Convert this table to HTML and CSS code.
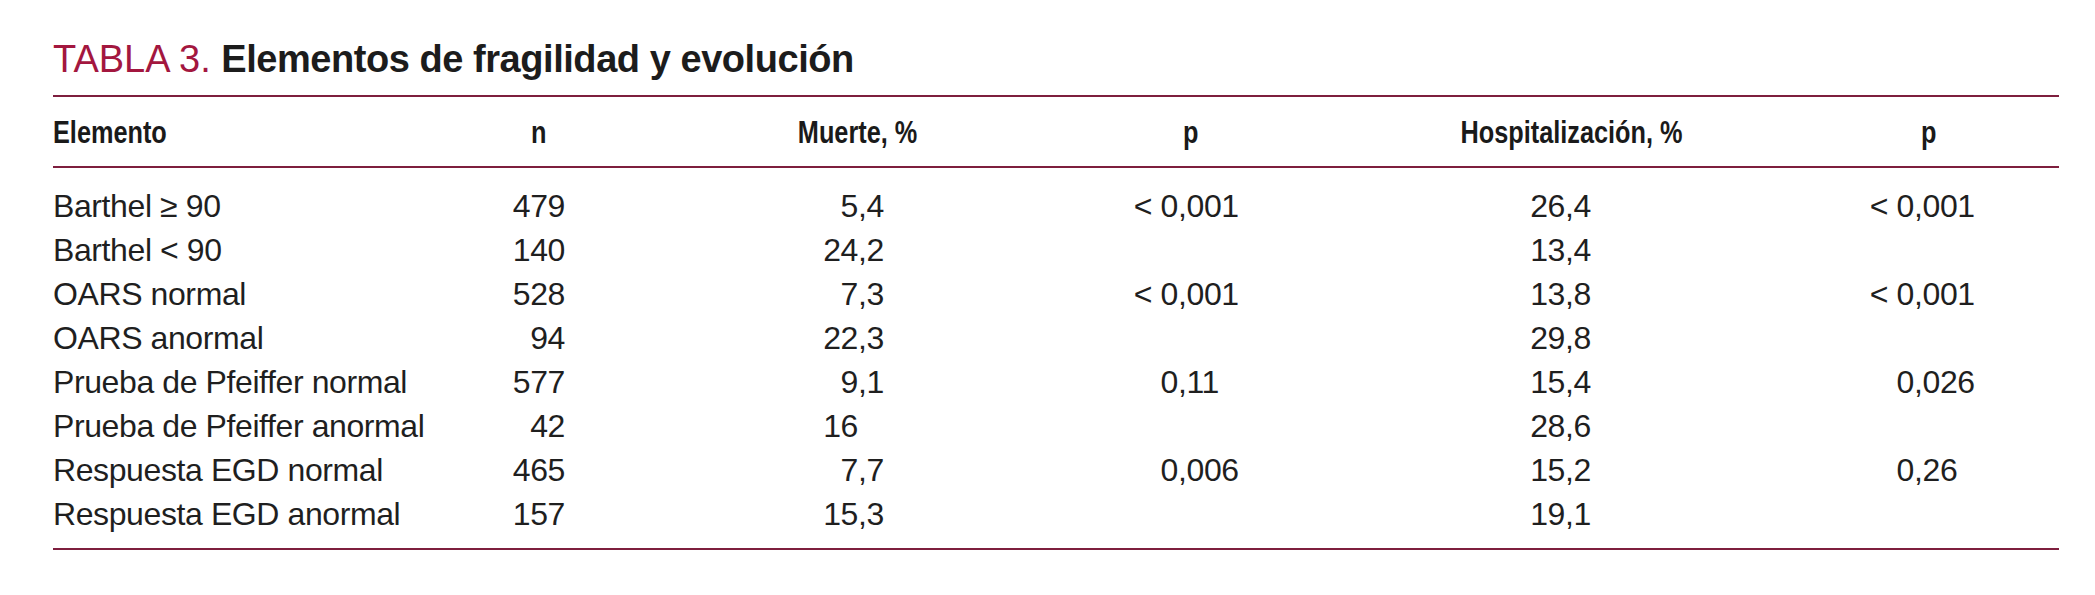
FILE: index.html
```html
<!DOCTYPE html>
<html lang="es">
<head>
<meta charset="utf-8">
<title>Tabla 3</title>
<link rel="stylesheet" href="styles.css">
</head>
<body>
<div class="page">
  <h1 class="title"><span class="label">TABLA 3.</span> <span class="name">Elementos de fragilidad y evolución</span></h1>
  <table class="data">
    <colgroup>
      <col class="c-el"><col class="c-n"><col class="c-m"><col class="c-p1"><col class="c-h"><col class="c-p2">
    </colgroup>
    <thead>
      <tr>
        <th class="left"><span class="hd">Elemento</span></th>
        <th><span class="hd">n</span></th>
        <th><span class="hd">Muerte, %</span></th>
        <th><span class="hd">p</span></th>
        <th><span class="hd">Hospitalización, %</span></th>
        <th><span class="hd">p</span></th>
      </tr>
    </thead>
    <tbody>
      <tr><td>Barthel ≥ 90</td><td><span class="i">479</span></td><td><span class="i">5</span><span class="f">,4</span></td><td><span class="i">&lt; 0</span><span class="f">,001</span></td><td><span class="i">26</span><span class="f">,4</span></td><td><span class="i">&lt; 0</span><span class="f">,001</span></td></tr>
      <tr><td>Barthel &lt; 90</td><td><span class="i">140</span></td><td><span class="i">24</span><span class="f">,2</span></td><td></td><td><span class="i">13</span><span class="f">,4</span></td><td></td></tr>
      <tr><td>OARS normal</td><td><span class="i">528</span></td><td><span class="i">7</span><span class="f">,3</span></td><td><span class="i">&lt; 0</span><span class="f">,001</span></td><td><span class="i">13</span><span class="f">,8</span></td><td><span class="i">&lt; 0</span><span class="f">,001</span></td></tr>
      <tr><td>OARS anormal</td><td><span class="i">94</span></td><td><span class="i">22</span><span class="f">,3</span></td><td></td><td><span class="i">29</span><span class="f">,8</span></td><td></td></tr>
      <tr><td>Prueba de Pfeiffer normal</td><td><span class="i">577</span></td><td><span class="i">9</span><span class="f">,1</span></td><td><span class="i">0</span><span class="f">,11</span></td><td><span class="i">15</span><span class="f">,4</span></td><td><span class="i">0</span><span class="f">,026</span></td></tr>
      <tr><td>Prueba de Pfeiffer anormal</td><td><span class="i">42</span></td><td><span class="i">16</span></td><td></td><td><span class="i">28</span><span class="f">,6</span></td><td></td></tr>
      <tr><td>Respuesta EGD normal</td><td><span class="i">465</span></td><td><span class="i">7</span><span class="f">,7</span></td><td><span class="i">0</span><span class="f">,006</span></td><td><span class="i">15</span><span class="f">,2</span></td><td><span class="i">0</span><span class="f">,26</span></td></tr>
      <tr><td>Respuesta EGD anormal</td><td><span class="i">157</span></td><td><span class="i">15</span><span class="f">,3</span></td><td></td><td><span class="i">19</span><span class="f">,1</span></td><td></td></tr>
    </tbody>
  </table>
</div>
</body>
</html>
```

FILE: styles.css
```css
html, body {
  margin: 0;
  padding: 0;
  background: #ffffff;
}

.page {
  padding: 37px 0 0 53px;
  font-family: "Liberation Sans", Arial, sans-serif;
  color: #1f1f1f;
}

.title {
  margin: 0 0 14px 0;
  font-size: 38px;
  line-height: 44px;
  font-weight: normal;
  white-space: nowrap;
}

.title .label {
  color: #a3173f;
}

.title .name {
  font-weight: bold;
  color: #1c1c1c;
  letter-spacing: -0.45px;
}

.data {
  width: 2006px;
  table-layout: fixed;
  border-collapse: collapse;
  border-top: 2px solid #7e1f3e;
  border-bottom: 2px solid #7e1f3e;
  font-size: 32px;
  line-height: 44px;
}

.c-el { width: 386px; }
.c-n { width: 200px; }
.c-m { width: 438px; }
.c-p1 { width: 228px; }
.c-h { width: 532px; }
.c-p2 { width: 222px; }

.data th {
  padding: 13px 0 12px 0;
  font-size: 32px;
  font-weight: bold;
  text-align: center;
  color: #1a1a1a;
  border-bottom: 2px solid #7e1f3e;
  white-space: nowrap;
}

.data th .hd {
  display: inline-block;
  transform: scaleX(0.79);
  transform-origin: center;
}

.data th.left {
  text-align: left;
}

.data th.left .hd {
  transform-origin: left center;
}

.data th:last-child {
  padding-right: 38px;
}

.data td {
  padding: 0;
  text-align: left;
  white-space: nowrap;
  color: #1f1f1f;
  letter-spacing: -0.4px;
}

.data tbody tr:first-child td {
  padding-top: 16px;
}

.data tbody tr:last-child td {
  padding-bottom: 12px;
}

.data td .i {
  display: inline-block;
  width: 60px;
  text-align: right;
}

.data td:nth-child(2) { padding-left: 66px; }
.data td:nth-child(3) { padding-left: 159px; }
.data td:nth-child(4) { padding-left: 41px; }
.data td:nth-child(5) { padding-left: 200px; }
.data td:nth-child(6) { padding-left: 17px; }
```
